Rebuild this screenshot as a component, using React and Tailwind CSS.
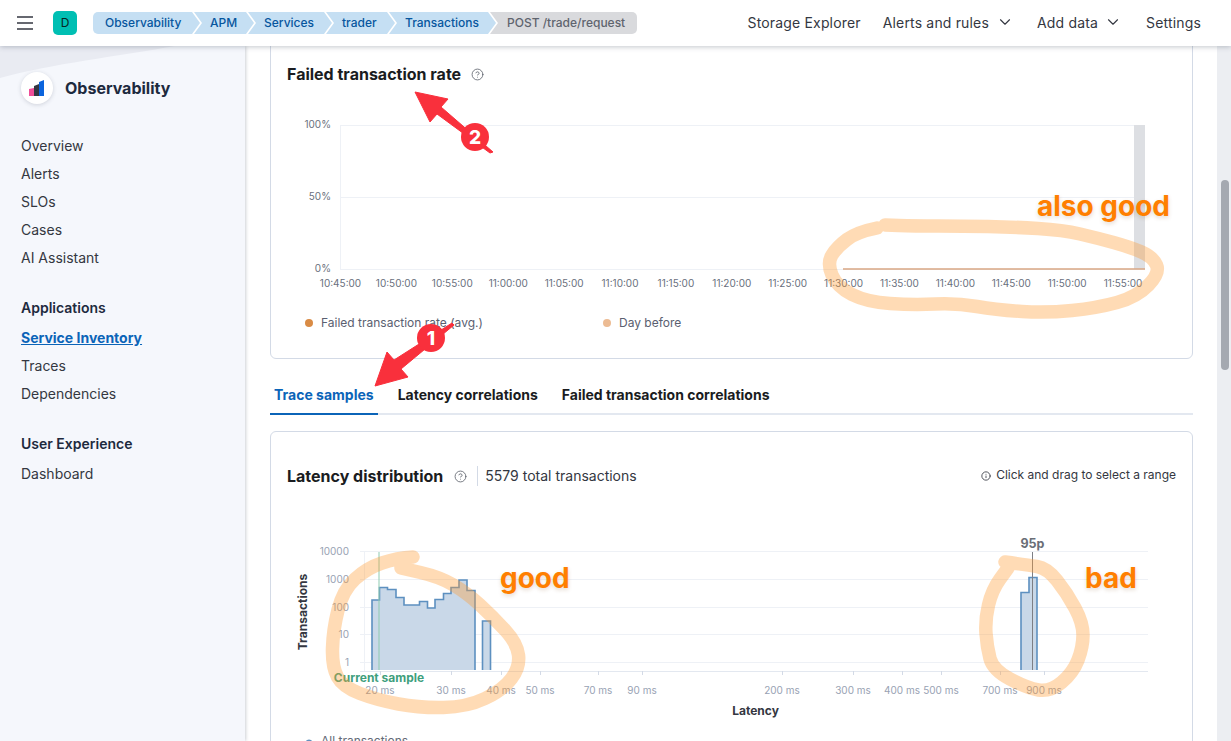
import React from 'react';
import { ChevronDown, CircleHelp, Info } from 'lucide-react';

const crumbs = [
  { label: 'Observability', cls: 'w-[107px] pl-[12px] rounded-l-[5px]', shape: '[clip-path:polygon(0_0,calc(100%-8px)_0,100%_50%,calc(100%-8px)_100%,0_100%)]' },
  { label: 'APM', cls: 'w-[60px] pl-[16px] -ml-[6px]', shape: '[clip-path:polygon(0_0,calc(100%-8px)_0,100%_50%,calc(100%-8px)_100%,0_100%,8px_50%)]' },
  { label: 'Services', cls: 'w-[84px] pl-[16px] -ml-[6px]', shape: '[clip-path:polygon(0_0,calc(100%-8px)_0,100%_50%,calc(100%-8px)_100%,0_100%,8px_50%)]' },
  { label: 'trader', cls: 'w-[69px] pl-[16px] -ml-[6px]', shape: '[clip-path:polygon(0_0,calc(100%-8px)_0,100%_50%,calc(100%-8px)_100%,0_100%,8px_50%)]' },
  { label: 'Transactions', cls: 'w-[107px] pl-[16px] -ml-[6px]', shape: '[clip-path:polygon(0_0,calc(100%-8px)_0,100%_50%,calc(100%-8px)_100%,0_100%,8px_50%)]' },
];

const timeTicks = ['10:45:00', '10:50:00', '10:55:00', '11:00:00', '11:05:00', '11:10:00', '11:15:00', '11:20:00', '11:25:00', '11:30:00', '11:35:00', '11:40:00', '11:45:00', '11:50:00', '11:55:00'];

const latencyTicks = [[380, '20 ms'], [451, '30 ms'], [501, '40 ms'], [540, '50 ms'], [598, '70 ms'], [642, '90 ms'], [782, '200 ms'], [853, '300 ms'], [902, '400 ms'], [941, '500 ms'], [1000, '700 ms'], [1044, '900 ms']];

const countTicks = [[551, '10000'], [579, '1000'], [607, '100'], [634, '10'], [662, '1']];

const bars = 'M372 670V600H379.5V587.5H387.5V589.5H396V597.5H404V605H419.5V601.5H427.5V608H435V599.5H443.5V593.5H451V587.5H459V580H467V590.5H475V670';
const barTwo = 'M482.5 670V621H490.5V670';
const barBad = 'M1021 670V592.5H1029V577.5H1037V670';

// smooth marker stroke through a list of points
function marker(points) {
  let d = `M${points[0][0]} ${points[0][1]}`;
  for (let i = 1; i < points.length - 1; i++) {
    const mx = (points[i][0] + points[i + 1][0]) / 2;
    const my = (points[i][1] + points[i + 1][1]) / 2;
    d += ` Q${points[i][0]} ${points[i][1]} ${mx} ${my}`;
  }
  const last = points[points.length - 1];
  return `${d} L${last[0]} ${last[1]}`;
}

const loopGood = [[413, 557], [397, 558], [367, 568], [343, 590], [333, 630], [332, 667], [343, 687], [377, 700], [420, 708], [467, 707], [503, 690], [520, 667], [517, 643], [493, 617], [467, 593], [440, 577], [401, 568]];
const loopBad = [[1005, 562], [1027, 565], [1047, 568], [1067, 593], [1083, 623], [1083, 647], [1073, 673], [1050, 692], [1027, 688], [993, 670], [987, 647], [985, 620], [992, 590], [1008, 568]];
const loopAlso = [[877, 228], [857, 232], [837, 247], [827, 263], [837, 287], [867, 302], [913, 305], [957, 303], [997, 310], [1047, 313], [1097, 308], [1137, 297], [1160, 273], [1153, 257], [1130, 247], [1097, 238], [1063, 230], [1013, 227], [963, 226], [913, 226], [885, 225]];

function Header() {
  return (
    <header className="relative z-20 h-[46px] shrink-0 bg-white flex items-center shadow-[0_1px_5px_rgba(60,70,90,0.3)]">
      <svg className="ml-[16px] w-[18px] h-[16px] text-[#343741]" viewBox="0 0 18 16" stroke="currentColor" strokeWidth="1.6">
        <path d="M1 2h16M1 8h16M1 14h16" />
      </svg>
      <div className="ml-[19px] w-[24px] h-[24px] rounded-[5px] bg-[#00bfb3] flex items-center justify-center text-[12px] text-[#07261f]">D</div>
      <nav className="ml-[16px] flex h-[22px] text-[12px] font-medium">
        {crumbs.map((c) => (
          <div key={c.label} className={`${c.cls} ${c.shape} bg-[#c5dff3] text-[#07569e] flex items-center`}>{c.label}</div>
        ))}
        <div className="w-[147px] -ml-[6px] pl-[17px] rounded-r-[5px] bg-[#d9dadd] text-[#5f646e] flex items-center [clip-path:polygon(0_0,100%_0,100%_100%,0_100%,8px_50%)]">POST /trade/request</div>
      </nav>
      <div className="ml-auto mr-[30px] pb-[2px] flex items-center text-[14px] tracking-[0.012em] text-[#343741]">
        <span>Storage Explorer</span>
        <span className="ml-[22px]">Alerts and rules</span>
        <ChevronDown className="ml-[7px] w-[18px] h-[18px]" strokeWidth={1.5} />
        <span className="ml-[23px]">Add data</span>
        <ChevronDown className="ml-[6px] w-[18px] h-[18px]" strokeWidth={1.5} />
        <span className="ml-[24px]">Settings</span>
      </div>
    </header>
  );
}

function Sidebar() {
  return (
    <aside className="relative w-[245px] shrink-0 bg-[#f5f7fc] shadow-[1px_0_3px_rgba(60,70,90,0.25)] z-10 pl-[21px] overflow-hidden text-[14px] text-[#343741]">
      {/* faint swoosh in the top corner */}
      <svg className="absolute left-0 top-0 w-[245px] h-[60px]" viewBox="0 0 245 60">
        <path d="M0 0H175C120 10 50 18 0 32Z" fill="#e9ebf2" />
      </svg>
      <div className="relative flex items-center mt-[26px] h-[32px]">
        <div className="w-[32px] h-[32px] rounded-full bg-white shadow-[0_1px_4px_rgba(60,70,90,0.2)] flex items-center justify-center">
          <svg className="w-[16px] h-[16px]" viewBox="0 0 16 16">
            <path d="M0 9l5-1v8H0z" fill="#f04e98" />
            <path d="M5 6l5-2v12H5z" fill="#343741" />
            <path d="M10 2l5-2v16h-5z" fill="#0b64dd" />
          </svg>
        </div>
        <span className="ml-[12px] text-[16px] font-bold text-[#1d2a3e]">Observability</span>
      </div>
      <ul className="mt-[31px] flex flex-col gap-[7px] leading-[21px]">
        <li>Overview</li>
        <li>Alerts</li>
        <li>SLOs</li>
        <li>Cases</li>
        <li>AI Assistant</li>
      </ul>
      <div className="mt-[29px] font-semibold leading-[21px] text-[#1d2a3e]">Applications</div>
      <ul className="mt-[9px] flex flex-col gap-[7px] leading-[21px]">
        <li className="font-bold text-[#0b64b8] underline">Service Inventory</li>
        <li>Traces</li>
        <li>Dependencies</li>
      </ul>
      <div className="mt-[29px] font-semibold leading-[21px] text-[#1d2a3e]">User Experience</div>
      <div className="mt-[9px] leading-[21px]">Dashboard</div>
    </aside>
  );
}

function RateChart() {
  return (
    <svg className="block mt-[14px] w-[921px] h-[200px]" viewBox="271 100 921 200">
      <g stroke="#eef1f6" fill="none">
        <path d="M340.5 125V269M340 125.5H1145M340 197.5H1145M340 269.5H1145" />
      </g>
      <rect x="1134" y="125" width="11" height="144" fill="#dddfe3" />
      <path d="M843 269H1145" stroke="#d9a683" strokeWidth="1.5" />
      <g fontSize="10" fill="#69707d" textAnchor="end">
        <text x="331" y="128">100%</text>
        <text x="331" y="200">50%</text>
        <text x="331" y="272">0%</text>
      </g>
      <g fontSize="10" fill="#69707d" textAnchor="middle">
        {timeTicks.map((t, i) => (
          <text key={t} x={340.5 + i * 55.9} y="287">{t}</text>
        ))}
      </g>
    </svg>
  );
}

function LatencyChart() {
  return (
    <svg className="block mt-[34px] w-[921px] h-[235px]" viewBox="271 520 921 235">
      <g stroke="#eef1f6" fill="none">
        {countTicks.map(([y]) => (
          <path key={y} d={`M360 ${y + 0.5}H1148`} />
        ))}
        <path d="M364.5 551V671" />
      </g>
      <path d="M360 671.5H1148" stroke="#e3e8f0" />
      <g stroke="#d3dae6">
        {latencyTicks.map(([x]) => (
          <path key={x} d={`M${x + 0.5} 671V675`} />
        ))}
      </g>
      <g fill="#c9d8e8" stroke="#5d90c0" strokeWidth="1.6">
        <path d={bars} />
        <path d={barTwo} />
        <path d={barBad} />
      </g>
      <path d="M379 552V670" stroke="#8ecbb1" strokeWidth="1" />
      <path d="M1032.5 552V670" stroke="#7d7f85" strokeWidth="1" />
      <text x="1032.5" y="548" fontSize="12.5" fontWeight="700" fill="#6a6e76" textAnchor="middle">95p</text>
      <g fontSize="10" fill="#98a2b3" textAnchor="end">
        {countTicks.map(([y, label]) => (
          <text key={y} x="349" y={y + 3.5}>{label}</text>
        ))}
      </g>
      <text transform="translate(307 612) rotate(-90)" fontSize="12" fontWeight="700" fill="#343741" textAnchor="middle">Transactions</text>
      <g fontSize="10" fill="#98a2b3" textAnchor="middle">
        {latencyTicks.map(([x, label]) => (
          <text key={x} x={x} y="694">{label}</text>
        ))}
      </g>
      <text x="379" y="682" fontSize="12" fontWeight="700" fill="#3f9f7d" textAnchor="middle">Current sample</text>
      <text x="755.5" y="715" fontSize="12" fontWeight="700" fill="#343741" textAnchor="middle">Latency</text>
      <circle cx="309" cy="743" r="3.5" fill="#6092c0" />
      <text x="321" y="745" fontSize="12" fill="#646a77">All transactions</text>
    </svg>
  );
}

function Annotations() {
  return (
    <div className="absolute inset-0 z-30 pointer-events-none">
      <svg className="absolute left-0 top-0 w-[1231px] h-[741px]" viewBox="0 0 1231 741">
        <g fill="none" stroke="#ff9a33" strokeOpacity="0.36" strokeWidth="13.5" strokeLinecap="round" strokeLinejoin="round">
          <path d={marker(loopAlso)} />
          <path d={marker(loopGood)} />
          <path d={marker(loopBad)} />
        </g>
        <g fill="#f9303c" stroke="#f9303c">
          <path d="M415 92L448 99L441 107L493 152L490 153L437 114L430 122Z" strokeWidth="1" strokeLinejoin="round" />
          <circle cx="475" cy="137" r="14" stroke="none" />
          <path d="M375 386L387 352L394 360L452 323L454 325L401 369L408 377Z" strokeWidth="1" strokeLinejoin="round" />
          <circle cx="431" cy="338" r="14" stroke="none" />
        </g>
        <g fontSize="19" fontWeight="800" fill="#fff" textAnchor="middle">
          <text x="475" y="144">2</text>
          <text x="431" y="345">1</text>
        </g>
      </svg>
      <span className="absolute left-[1037px] top-[188px] text-[28px] leading-[36px] font-bold text-[#ff7f00] [text-shadow:0_2px_4px_rgba(120,70,20,0.2)]">also good</span>
      <span className="absolute left-[500px] top-[560px] text-[28px] leading-[36px] font-bold text-[#ff7f00] [text-shadow:0_2px_4px_rgba(120,70,20,0.2)]">good</span>
      <span className="absolute left-[1085px] top-[560px] text-[28px] leading-[36px] font-bold text-[#ff7f00] [text-shadow:0_2px_4px_rgba(120,70,20,0.2)]">bad</span>
    </div>
  );
}

export default function App() {
  return (
    <div className="relative w-[1231px] h-[741px] overflow-hidden flex flex-col bg-white font-['Inter','Noto_Sans',sans-serif]">
      <Header />
      <div className="flex flex-1 min-h-0">
        <Sidebar />
        <main className="flex-1 min-w-0 overflow-hidden pl-[25px] pr-[24px]">
          {/* panel is scrolled partly under the header */}
          <section className="-mt-[20px] h-[333px] border border-[#d3dae6] rounded-[6px]">
            <div className="flex items-center h-[24px] mt-[35px] pl-[16px]">
              <h2 className="text-[16px] font-bold text-[#1a1c21]">Failed transaction rate</h2>
              <CircleHelp className="ml-[10px] w-[13px] h-[13px] text-[#5a5f69]" strokeWidth={1.5} />
            </div>
            <RateChart />
            <div className="flex items-center h-[16px] mt-[15px] pl-[34px] text-[12px] text-[#5a6070]">
              <div className="w-[298px] flex items-center">
                <span className="w-[8px] h-[8px] rounded-full bg-[#d98b45]" />
                <span className="ml-[8px]">Failed transaction rate (avg.)</span>
              </div>
              <div className="flex items-center">
                <span className="w-[8px] h-[8px] rounded-full bg-[#ecbb93]" />
                <span className="ml-[8px]">Day before</span>
              </div>
            </div>
          </section>

          <div className="mt-[22px] h-[34px] border-b-2 border-[#e3e8f0] flex text-[14px] font-bold text-[#1a1c21]">
            <div className="h-[34px] px-[4px] pb-[6px] flex items-center border-b-2 border-[#0b64b8] text-[#0b64b8]">Trace samples</div>
            <div className="ml-[20px] h-[32px] pb-[6px] flex items-center">Latency correlations</div>
            <div className="ml-[24px] h-[32px] pb-[6px] flex items-center">Failed transaction correlations</div>
          </div>

          <section className="mt-[16px] h-[340px] border border-[#d3dae6] rounded-[6px]">
            <div className="flex items-center h-[20px] mt-[34px] pl-[16px] pr-[16px]">
              <h2 className="text-[16px] font-bold text-[#1a1c21]">Latency distribution</h2>
              <CircleHelp className="ml-[11px] w-[13px] h-[13px] text-[#5a5f69]" strokeWidth={1.5} />
              <div className="ml-[10px] w-px h-[20px] bg-[#d3dae6]" />
              <span className="ml-[7px] pb-[2px] text-[14px] text-[#343741]">5579 total transactions</span>
              <Info className="ml-auto w-[10px] h-[10px] text-[#343741]" strokeWidth={2} />
              <span className="ml-[5px] pb-[2px] text-[12px] text-[#343741]">Click and drag to select a range</span>
            </div>
            <LatencyChart />
          </section>
        </main>
        {/* page scrollbar */}
        <div className="w-[14px] shrink-0 bg-[#eceef2] pl-[4px] pt-[134px]">
          <div className="w-[8px] h-[190px] rounded-full bg-[#a5a9b1]" />
        </div>
      </div>
      <Annotations />
    </div>
  );
}
